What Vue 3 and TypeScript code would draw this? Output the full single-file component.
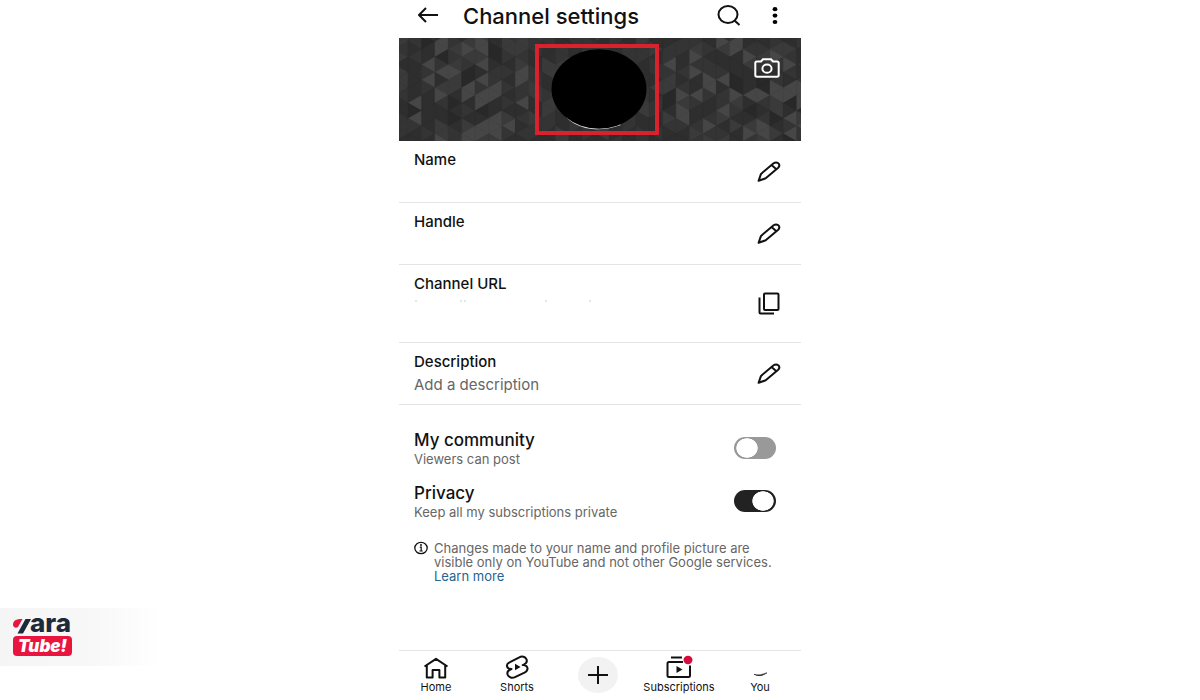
<script setup lang="ts">
import { ref } from 'vue'

interface Field {
  label: string
  value: string
  kind: 'edit' | 'copy'
}

const fields: Field[] = [
  { label: 'Name', value: '', kind: 'edit' },
  { label: 'Handle', value: '', kind: 'edit' },
  { label: 'Channel URL', value: '', kind: 'copy' },
  { label: 'Description', value: 'Add a description', kind: 'edit' },
]

const community = ref(false)
const privateSubs = ref(true)

// Banner mosaic: one string per vertical strip, one digit per triangle (0 dark, 4 light).
const shades = ['#282828', '#2e2e2e', '#343434', '#3a3a3a', '#464646']
const strips = [
  '332313332112221', '221211111404211', '201142421111121', '144024134211334',
  '123234331010122', '134320044121344', '344341424401443', '110012244114443',
  '233212121213421', '333234422412121', '322112233113221', '221133112332211',
  '112233211221133', '221133112332211', '122332112233121', '312211223311331',
  '221133112233112', '112211332112211', '332211122331122', '113122131221121',
  '112242330013211', '122112124344211', '223424114211232', '112122442112423',
  '143112412243123', '244111004321311', '112431114101342', '212321004212443',
  '123421244330131', '113242144014240', '121121244403422',
]
const stripWidth = 13.27
const half = 7.6
const triangles = strips.flatMap((strip, s) => {
  const left = 11 + stripWidth * (s - 1)
  const right = left + stripWidth
  return [...strip].map((digit, k) => {
    const y = half * k - 4
    const base = (s + k) % 2 === 1 ? left : right
    const apex = (s + k) % 2 === 1 ? right : left
    return {
      points: `${base},${y - half} ${apex},${y} ${base},${y + half}`,
      fill: shades[Number(digit)],
    }
  })
})
</script>

<template>
  <div class="page">
    <aside class="side">
      <a class="brand" href="#" aria-label="yara Tube!">
        <span class="brand-top">
          <svg width="18" height="16" viewBox="0 0 18 16" aria-hidden="true">
            <path d="M0 7C0 2.5 3 1 9.5 1L5 9C3 10.5 .5 9.5 0 7Z" fill="#e9153f" />
            <path d="M12.5 1H18L10 15.5H4.5Z" fill="#1d2a3a" />
          </svg>
          <span>ara</span>
        </span>
        <span class="brand-tube">Tube!</span>
      </a>
    </aside>

    <main class="phone">
      <header class="bar">
        <button class="icon-btn" type="button" aria-label="Back">
          <svg width="22" height="18" viewBox="0 0 22 18" class="line"><path d="M21 8H2M9 1L2 8L9 15" /></svg>
        </button>
        <h1>Channel settings</h1>
        <button class="icon-btn" type="button" aria-label="Search">
          <svg width="24" height="22" viewBox="0 0 24 22" class="line"><ellipse cx="11" cy="9.5" rx="9.5" ry="8.5" /><path d="M17.5 15.5L22.5 20" /></svg>
        </button>
        <button class="icon-btn more" type="button" aria-label="More options">
          <svg width="6" height="18" viewBox="0 0 6 18"><ellipse cx="3" cy="2.2" rx="2.4" ry="2.1" /><ellipse cx="3" cy="8.6" rx="2.4" ry="2.1" /><ellipse cx="3" cy="15" rx="2.4" ry="2.1" /></svg>
        </button>
      </header>

      <section class="banner">
        <svg class="mosaic" viewBox="0 0 402 102" preserveAspectRatio="xMidYMid slice" aria-hidden="true">
          <polygon v-for="(t, i) in triangles" :key="i" :points="t.points" :fill="t.fill" :stroke="t.fill" stroke-width="0.4" />
        </svg>
        <button class="avatar" type="button" aria-label="Change profile picture">
          <svg width="96" height="82" viewBox="0 0 96 82"><path d="M6 55C18 81 46 85 70 76L60 70L20 60Z" fill="#e8e8e8" /><ellipse cx="48" cy="40" rx="47.5" ry="39.7" /></svg>
        </button>
        <button class="icon-btn camera" type="button" aria-label="Change banner">
          <svg width="26" height="20" viewBox="0 0 26 20" fill="none" stroke="#fff" stroke-width="2"><path d="M3 3.5H7L9 1.3H17L19 3.5H23Q24.7 3.5 24.7 5V17Q24.7 18.7 23 18.7H3Q1.3 18.7 1.3 17V5Q1.3 3.5 3 3.5Z" /><ellipse cx="13" cy="10.7" rx="4.6" ry="4.1" /></svg>
        </button>
      </section>

      <section v-for="f in fields" :key="f.label" class="field" :class="f.kind">
        <div class="field-text">
          <h2>{{ f.label }}</h2>
          <p v-if="f.value">{{ f.value }}</p>
          <svg v-if="f.kind === 'copy'" class="traces" width="180" height="4" viewBox="0 0 180 4" aria-hidden="true">
            <path d="M1 2H3M46 2H48M50 2H52M131 2H133M175 2H177" />
          </svg>
        </div>
        <button class="icon-btn" type="button" :aria-label="(f.kind === 'copy' ? 'Copy ' : 'Edit ') + f.label">
          <svg v-if="f.kind === 'edit'" width="24" height="22" viewBox="0 0 24 22" class="line"><path d="M1.6 19.8L4 12.9L16.6 2.3Q19 0.6 21.3 2.2Q23.4 4.5 21.2 6.7L8.7 17.3Z" /><path d="M14.5 4.1L19.4 8.3" /></svg>
          <svg v-else width="24" height="24" viewBox="0 0 24 24" class="line"><rect x="7" y="1.5" width="14.5" height="16.5" rx="1" /><path d="M2.5 5.5V20.5Q2.5 21.5 3.5 21.5H17" /></svg>
        </button>
      </section>

      <section class="options">
        <label class="option">
          <span class="option-text"><strong>My community</strong><small>Viewers can post</small></span>
          <input v-model="community" type="checkbox" role="switch" />
        </label>
        <label class="option">
          <span class="option-text"><strong>Privacy</strong><small>Keep all my subscriptions private</small></span>
          <input v-model="privateSubs" type="checkbox" role="switch" />
        </label>
        <div class="note">
          <svg width="14" height="14" viewBox="0 0 14 14" aria-hidden="true"><ellipse cx="7" cy="7" rx="6.2" ry="5.7" fill="none" stroke="#111" stroke-width="1.3" /><path d="M5.8 6.2H7.2V10M5.5 10H8.7" fill="none" stroke="#111" stroke-width="1.2" /><circle cx="7" cy="4" r="0.9" /></svg>
          <p>Changes made to your name and profile picture are visible only on YouTube and not other Google services. <a href="#">Learn more</a></p>
        </div>
      </section>

      <nav class="tabs">
        <button type="button">
          <svg width="26" height="22" viewBox="0 0 26 22" class="line"><path d="M1.5 9.5L13 1.8L24.5 9.5M3.8 8.5V20.5H9.6V13H16.4V20.5H22.2V8.5" /></svg>
          <span>Home</span>
        </button>
        <button type="button">
          <svg width="24" height="24" viewBox="0 0 24 24" class="line"><path d="M5 7.2L14.3 2.3C17 .8 20.3 1.7 21.4 4.2C22.4 6.5 21.3 8.5 18.8 9.6L17.7 10.1C21.2 10 22.8 12 22.5 14.3C22.2 15.8 21.3 16.8 19.5 17.7L10 22.1C7.2 23.4 3.8 22.5 2.7 19.9C1.8 17.6 3 15.6 5.3 14.5L6.5 14C3.5 14 1.9 12.4 1.9 10.3C2 8.9 3.1 8.1 5 7.2Z" /><path d="M10 8.8L15.6 12L10 15.2Z" fill="#111" stroke="none" /></svg>
          <span>Shorts</span>
        </button>
        <button type="button" class="create" aria-label="Create">
          <svg width="40" height="36" viewBox="0 0 40 36"><ellipse cx="20" cy="18" rx="20" ry="18" fill="#f2f2f2" /><path d="M10 18H30M20 9V27" fill="none" stroke="#111" stroke-width="2" /></svg>
        </button>
        <button type="button">
          <svg width="28" height="24" viewBox="0 0 28 24" class="line"><path d="M6 2.5H17M25 10.5V20.5Q25 22 23.5 22H4Q2.5 22 2.5 20.5V8.5Q2.5 7 4 7H18" /><path d="M11.5 11L17.5 14.5L11.5 18Z" fill="#111" stroke="none" /><ellipse cx="23" cy="5" rx="4.5" ry="4.2" fill="#d50b3c" stroke="none" /></svg>
          <span>Subscriptions</span>
        </button>
        <button type="button" class="you">
          <svg width="16" height="8" viewBox="0 0 16 8"><path d="M2 3.4Q8 5 15 1.8Q9 6.6 2 3.4Z" fill="#111" stroke="#111" stroke-width="0.5" /></svg>
          <span>You</span>
        </button>
      </nav>
    </main>
  </div>
</template>

<style>
body {
  margin: 0;
  background: #fff;
}
</style>

<style scoped>
.page {
  display: grid;
  grid-template-columns: minmax(0, 1fr) minmax(0, 402px) minmax(0, 1fr);
  min-height: 100vh;
  color: #111;
  font-family: Inter, "Liberation Sans", sans-serif;
}
h1, h2, p {
  margin: 0;
}
button {
  padding: 0;
  border: 0;
  background: none;
  color: inherit;
  font: inherit;
  cursor: pointer;
}
svg {
  display: block;
}
.line {
  fill: none;
  stroke: #111;
  stroke-width: 2;
  stroke-linejoin: round;
}
.side {
  display: flex;
  align-items: flex-end;
}
.brand {
  box-sizing: border-box;
  width: 160px;
  height: 58px;
  margin-bottom: 34px;
  padding: 2px 13px 0;
  background: linear-gradient(90deg, #f5f5f5, #f8f8f8 60%, #fff);
  text-decoration: none;
}
.brand-top {
  display: flex;
  align-items: center;
  height: 26px;
  color: #1d2a3a;
  font-size: 26px;
  font-weight: 800;
  line-height: 26px;
}
.brand-top svg {
  margin-top: 6px;
  margin-right: -1px;
}
.brand-tube {
  display: block;
  width: 59px;
  border-radius: 4px;
  background: #e9153f;
  color: #fff;
  font-size: 17px;
  font-style: italic;
  font-weight: 900;
  line-height: 20px;
  text-align: center;
}
.phone {
  display: flex;
  flex-direction: column;
}
.bar {
  display: flex;
  align-items: center;
  height: 32px;
  padding: 0 23px 6px 18px;
}
.bar h1 {
  flex: 1;
  margin-left: 24px;
  font-size: 22px;
  font-weight: 500;
  line-height: 32px;
}
.more {
  margin-left: 31px;
}
.banner {
  position: relative;
  display: flex;
  justify-content: center;
  height: 103px;
  background: #303030;
}
.mosaic {
  position: absolute;
  width: 100%;
  height: 100%;
}
.avatar {
  position: relative;
  box-sizing: border-box;
  width: 124px;
  height: 91px;
  margin-top: 6px;
  margin-right: 6px;
  padding-left: 12px;
  border: 4px solid #d9222d;
}
.camera {
  position: absolute;
  top: 20px;
  right: 21px;
}
.field {
  display: flex;
  align-items: center;
  justify-content: space-between;
  box-sizing: border-box;
  min-height: 62px;
  padding: 0 20px 0 15px;
  border-bottom: 1px solid #e4e4e4;
}
.field.copy {
  min-height: 78px;
}
.field-text {
  align-self: flex-start;
  padding-top: 7px;
}
.field h2 {
  font-size: 15px;
  font-weight: 500;
  line-height: 23px;
}
.field p {
  color: #666;
  font-size: 15px;
  line-height: 23px;
}
.traces {
  margin-top: 4px;
  fill: none;
  stroke: #ccc;
  stroke-width: 1;
}
.options {
  display: grid;
  gap: 11px;
  padding: 22px 25px 24px 15px;
}
.option {
  display: flex;
  align-items: center;
  justify-content: space-between;
  height: 42px;
}
.option-text strong {
  display: block;
  font-size: 17px;
  font-weight: 500;
  line-height: 22px;
}
.option-text small {
  display: block;
  color: #666;
  font-size: 13px;
  line-height: 16px;
}
.option input {
  appearance: none;
  width: 42px;
  height: 22px;
  margin: 0;
  border-radius: 11px;
  background: radial-gradient(ellipse 11px 10px at 13px 11px, #fff 94%, #999 100%);
}
.option input:checked {
  background: radial-gradient(ellipse 11px 10px at 29px 11px, #fff 94%, #222 100%);
}
.note {
  display: flex;
  gap: 6px;
  margin-top: 8px;
  color: #666;
  font-size: 13px;
  line-height: 14px;
}
.note svg {
  flex: none;
}
.note a {
  display: block;
  color: #24648f;
  text-decoration: none;
}
.tabs {
  display: flex;
  justify-content: space-between;
  height: 49px;
  margin-top: auto;
  padding-right: 4px;
  border-top: 1px solid #e4e4e4;
}
.tabs button {
  display: flex;
  flex-direction: column;
  align-items: center;
  justify-content: flex-end;
  gap: 2px;
  width: 74px;
  padding-bottom: 7px;
  font-size: 11px;
  line-height: 12px;
}
.tabs .create {
  justify-content: center;
  padding: 0 0 2px;
}
</style>
